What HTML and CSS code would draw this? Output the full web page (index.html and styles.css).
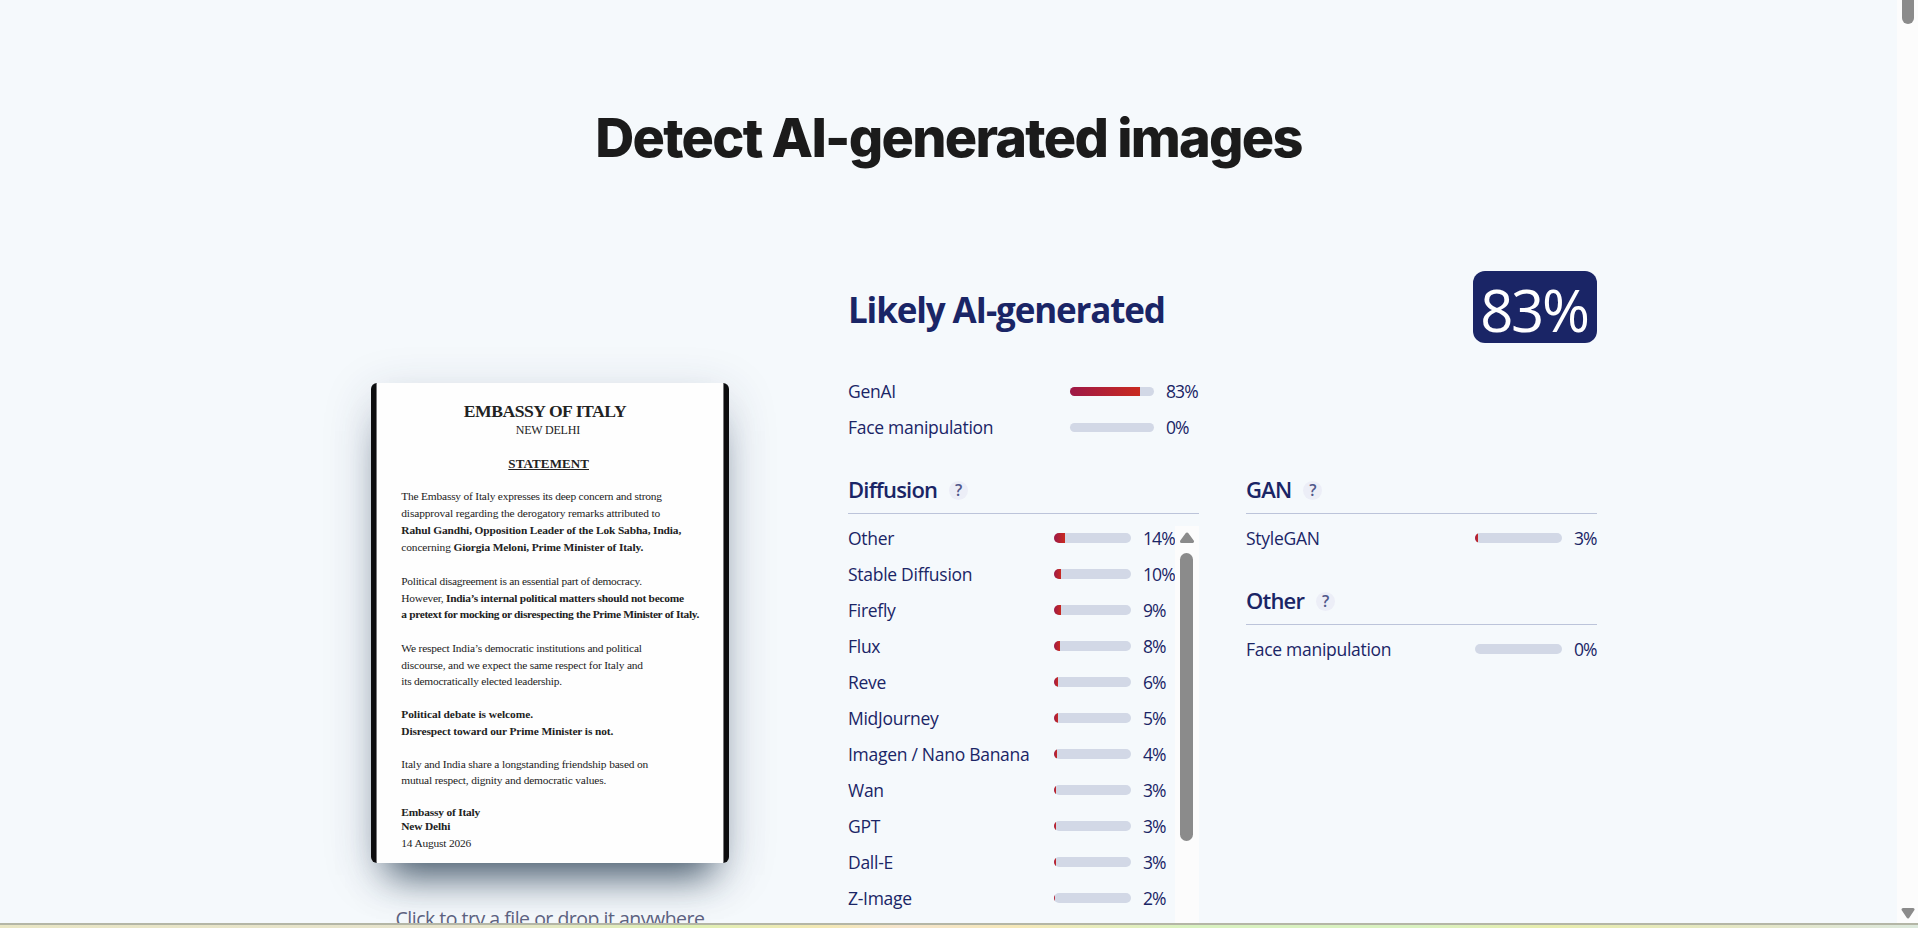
FILE: index.html
```html
<!DOCTYPE html>
<html lang="en">

<head>
    <meta charset="UTF-8">
    <meta name="viewport" content="width=device-width, initial-scale=1.0">
    <title>Detect AI-generated images</title>
    <link rel="stylesheet" href="styles.css">
</head>

<body>
    <div class="window">
        <main class="page">
            <h1>Detect AI-generated images</h1>

            <div class="content">
                <section class="preview">
                    <svg class="picture" viewBox="0 0 358 480" width="358" height="480">
                        <rect width="358" height="480" fill="#0d0d0f" />
                        <rect x="5" width="348" height="480" fill="#77777a" />
                        <rect x="6" width="346" height="480" fill="#fefefe" />
                        <text class="b" x="92.7" y="34" font-size="17.6" textLength="163">EMBASSY OF ITALY</text>
                        <text x="144.7" y="51.3" font-size="12" textLength="64.5">NEW DELHI</text>
                        <text class="b" x="137.3" y="85" font-size="13" textLength="80.7">STATEMENT</text>
                        <rect x="137.3" y="86" width="80.7" height="1" fill="#222" />
                        <text x="30.3" y="117.3" textLength="260.7">The Embassy of Italy expresses its deep concern and strong</text>
                        <text x="30.3" y="134" textLength="259">disapproval regarding the derogatory remarks attributed to</text>
                        <text class="b" x="30.3" y="150.7" textLength="280">Rahul Gandhi, Opposition Leader of the Lok Sabha, India,</text>
                        <text x="30.3" y="168.3" textLength="242">concerning <tspan class="b">Giorgia Meloni, Prime Minister of Italy.</tspan></text>
                        <text x="30.3" y="202" textLength="240.7">Political disagreement is an essential part of democracy.</text>
                        <text x="30.3" y="218.7" textLength="282.7">However, <tspan class="b">India’s internal political matters should not become</tspan></text>
                        <text class="b" x="30.3" y="235.3" textLength="298">a pretext for mocking or disrespecting the Prime Minister of Italy.</text>
                        <text x="30.3" y="269.3" textLength="240.7">We respect India’s democratic institutions and political</text>
                        <text x="30.3" y="285.7" textLength="241.7">discourse, and we expect the same respect for Italy and</text>
                        <text x="30.3" y="302.3" textLength="160.7">its democratically elected leadership.</text>
                        <text class="b" x="30.3" y="335.3" textLength="131.7">Political debate is welcome.</text>
                        <text class="b" x="30.3" y="351.7" textLength="212">Disrespect toward our Prime Minister is not.</text>
                        <text x="30.3" y="385" textLength="247">Italy and India share a longstanding friendship based on</text>
                        <text x="30.3" y="401.3" textLength="205">mutual respect, dignity and democratic values.</text>
                        <text class="b" x="30.3" y="432.7" textLength="79">Embassy of Italy</text>
                        <text class="b" x="30.3" y="447.3" textLength="49">New Delhi</text>
                        <text x="30.3" y="463.7" textLength="70">14 August 2026</text>
                    </svg>
                    <p class="hint">Click to try a file or drop it anywhere</p>
                </section>

                <section class="results">
                    <div class="verdict">
                        <h2>Likely AI-generated</h2>
                        <span class="score">83%</span>
                    </div>

                    <div class="summary">
                        <div class="row"><span class="name">GenAI</span><span class="bar"><i style="width: 83%"></i></span><span class="value">83%</span></div>
                        <div class="row"><span class="name">Face manipulation</span><span class="bar"></span><span class="value">0%</span></div>
                    </div>

                    <div class="groups">
                        <div class="group diffusion">
                            <h3>Diffusion <span class="help">?</span></h3>
                            <div class="scroller">
                                <div class="list">
                                    <div class="row"><span class="name">Other</span><span class="bar"><i style="width: 14%"></i></span><span class="value">14%</span></div>
                                    <div class="row"><span class="name">Stable Diffusion</span><span class="bar"><i style="width: 9.5%"></i></span><span class="value">10%</span></div>
                                    <div class="row"><span class="name">Firefly</span><span class="bar"><i style="width: 9%"></i></span><span class="value">9%</span></div>
                                    <div class="row"><span class="name">Flux</span><span class="bar"><i style="width: 8%"></i></span><span class="value">8%</span></div>
                                    <div class="row"><span class="name">Reve</span><span class="bar"><i style="width: 5.5%"></i></span><span class="value">6%</span></div>
                                    <div class="row"><span class="name">MidJourney</span><span class="bar"><i style="width: 5%"></i></span><span class="value">5%</span></div>
                                    <div class="row"><span class="name">Imagen / Nano Banana</span><span class="bar"><i style="width: 4%"></i></span><span class="value">4%</span></div>
                                    <div class="row"><span class="name">Wan</span><span class="bar"><i style="width: 3%"></i></span><span class="value">3%</span></div>
                                    <div class="row"><span class="name">GPT</span><span class="bar"><i style="width: 3%"></i></span><span class="value">3%</span></div>
                                    <div class="row"><span class="name">Dall-E</span><span class="bar"><i style="width: 3%"></i></span><span class="value">3%</span></div>
                                    <div class="row"><span class="name">Z-Image</span><span class="bar"><i style="width: 1.5%"></i></span><span class="value">2%</span></div>
                                </div>
                                <div class="track">
                                    <svg width="16" height="12" viewBox="0 0 16 12"><path d="M8 2 L13.5 9.5 H2.5 Z" fill="#8b8b8b" stroke="#8b8b8b" stroke-width="3" stroke-linejoin="round" /></svg>
                                    <div class="thumb"></div>
                                </div>
                            </div>
                        </div>

                        <div class="side">
                            <div class="group">
                                <h3>GAN <span class="help">?</span></h3>
                                <div class="row"><span class="name">StyleGAN</span><span class="bar"><i style="width: 3%"></i></span><span class="value">3%</span></div>
                            </div>
                            <div class="group">
                                <h3>Other <span class="help">?</span></h3>
                                <div class="row"><span class="name">Face manipulation</span><span class="bar"></span><span class="value">0%</span></div>
                            </div>
                        </div>
                    </div>
                </section>
            </div>
        </main>

        <div class="page-track">
            <div class="page-thumb"></div>
            <svg width="14" height="12" viewBox="0 0 14 12"><path d="M7 10 L12 2.5 H2 Z" fill="#8b8b8b" stroke="#8b8b8b" stroke-width="3" stroke-linejoin="round" /></svg>
        </div>
    </div>
    <div class="edge"></div>
</body>

</html>
```

FILE: styles.css
```css
* {
    box-sizing: border-box;
}

body {
    margin: 0;
    height: 928px;
    overflow: hidden;
    background-color: #f5f9fc;
    color: #1a2566;
    font-family: 'Open Sans', 'Noto Sans', sans-serif;
    font-size: 17.5px;
}

h1,
h2,
h3,
p {
    margin: 0;
}

.window {
    display: flex;
    height: 923px;
}

.page {
    flex: 1;
    height: 923px;
    overflow: hidden;
}

h1 {
    padding-top: 106px;
    height: 271px;
    color: #1b1b1b;
    font-family: Inter, sans-serif;
    font-size: 54px;
    font-weight: 800;
    line-height: 64px;
    letter-spacing: -1.75px;
    text-align: center;
    white-space: nowrap;
}

.content {
    display: grid;
    grid-template-columns: 358px 749px;
    column-gap: 119px;
    padding-left: 371px;
}

/* uploaded picture */
.preview {
    padding-top: 112px;
}

.picture {
    display: block;
    border-radius: 6px;
    box-shadow: 0 30px 36px -18px rgba(20, 45, 65, 0.75), 0 12px 50px rgba(40, 50, 90, 0.18);
    font-family: 'Liberation Serif', serif;
    font-size: 11.4px;
    fill: #222;
}

.picture .b {
    font-weight: 700;
}

.hint {
    margin-top: 42px;
    color: #5c6180;
    font-size: 19.5px;
    line-height: 28px;
    letter-spacing: -0.5px;
    text-align: center;
    white-space: nowrap;
}

/* scores */
.verdict {
    display: flex;
    justify-content: space-between;
    align-items: center;
    height: 72px;
}

h2 {
    font-size: 35px;
    font-weight: 700;
    line-height: 48px;
    letter-spacing: -1.15px;
    padding-top: 5px;
}

.score {
    width: 124px;
    height: 72px;
    padding-top: 5px;
    border-radius: 12px;
    background-color: #1a2566;
    color: #fff;
    font-size: 58px;
    line-height: 68px;
    letter-spacing: -2.2px;
    text-indent: -2px;
    text-align: center;
}

.summary {
    width: 351px;
    margin-top: 30px;
}

.row {
    display: flex;
    align-items: center;
    height: 36px;
    white-space: nowrap;
    letter-spacing: -0.28px;
}

.name {
    flex: 1;
}

.bar {
    width: 84px;
    height: 9px;
    border-radius: 5px;
    background-color: #d2d8e6;
    overflow: hidden;
}

.bar i {
    display: block;
    height: 100%;
    background: linear-gradient(90deg, #9e1947, #c92a20);
}

.value {
    width: 45px;
    padding-left: 12px;
    letter-spacing: -0.9px;
}

.groups {
    display: grid;
    grid-template-columns: 351px 351px;
    column-gap: 47px;
    margin-top: 29px;
}

h3 {
    display: flex;
    align-items: center;
    height: 40px;
    margin-bottom: 6px;
    padding-bottom: 9px;
    border-bottom: 1px solid #bcc4da;
    font-size: 22px;
    font-weight: 600;
    line-height: 30px;
    letter-spacing: -0.8px;
}

.help {
    width: 19px;
    height: 19px;
    margin: 3px 0 0 12px;
    border-radius: 50%;
    background-color: #eceef7;
    color: #50588a;
    font-size: 16px;
    line-height: 19px;
    letter-spacing: 0;
    text-align: center;
}

.scroller {
    display: flex;
    margin-top: 12px;
    height: 420px;
}

.list {
    width: 327px;
    margin-top: -6px;
}

.list .bar,
.side .bar {
    width: 77px;
    height: 10px;
}

.list .value {
    width: 44px;
    padding-left: 12px;
}

.track {
    width: 24px;
    padding-top: 6px;
    background-color: #fcfcfc;
}

.track svg {
    display: block;
    margin: 0 auto;
}

.thumb {
    width: 13px;
    height: 288px;
    margin: 9px 0 0 5px;
    border-radius: 7px;
    background-color: #8b8b8b;
}

.side .bar {
    width: 87px;
}

.side .value {
    width: 35px;
}

.side .group {
    height: 111px;
}

/* window scrollbar */
.page-track {
    display: flex;
    flex-direction: column;
    justify-content: space-between;
    align-items: center;
    width: 21px;
    padding: 0 1px 4px 2px;
    background-color: #fcfcfc;
}

.page-thumb {
    width: 12px;
    height: 24px;
    border-radius: 0 0 6px 6px;
    background-color: #8b8b8b;
}

.edge {
    height: 5px;
    border-top: 2px solid #b4b6a6;
    background: linear-gradient(90deg, #e9e6c4, #e6e3cd 24%, #dff0b4 36%, #f3e8b4 43%, #f5e4cc 47%, #f5e8b8 53%, #d9f2c0 62%, #d9f2c0 74%, #e8edac 81%, #e4e6c8 92%, #dce8dc);
}
```
